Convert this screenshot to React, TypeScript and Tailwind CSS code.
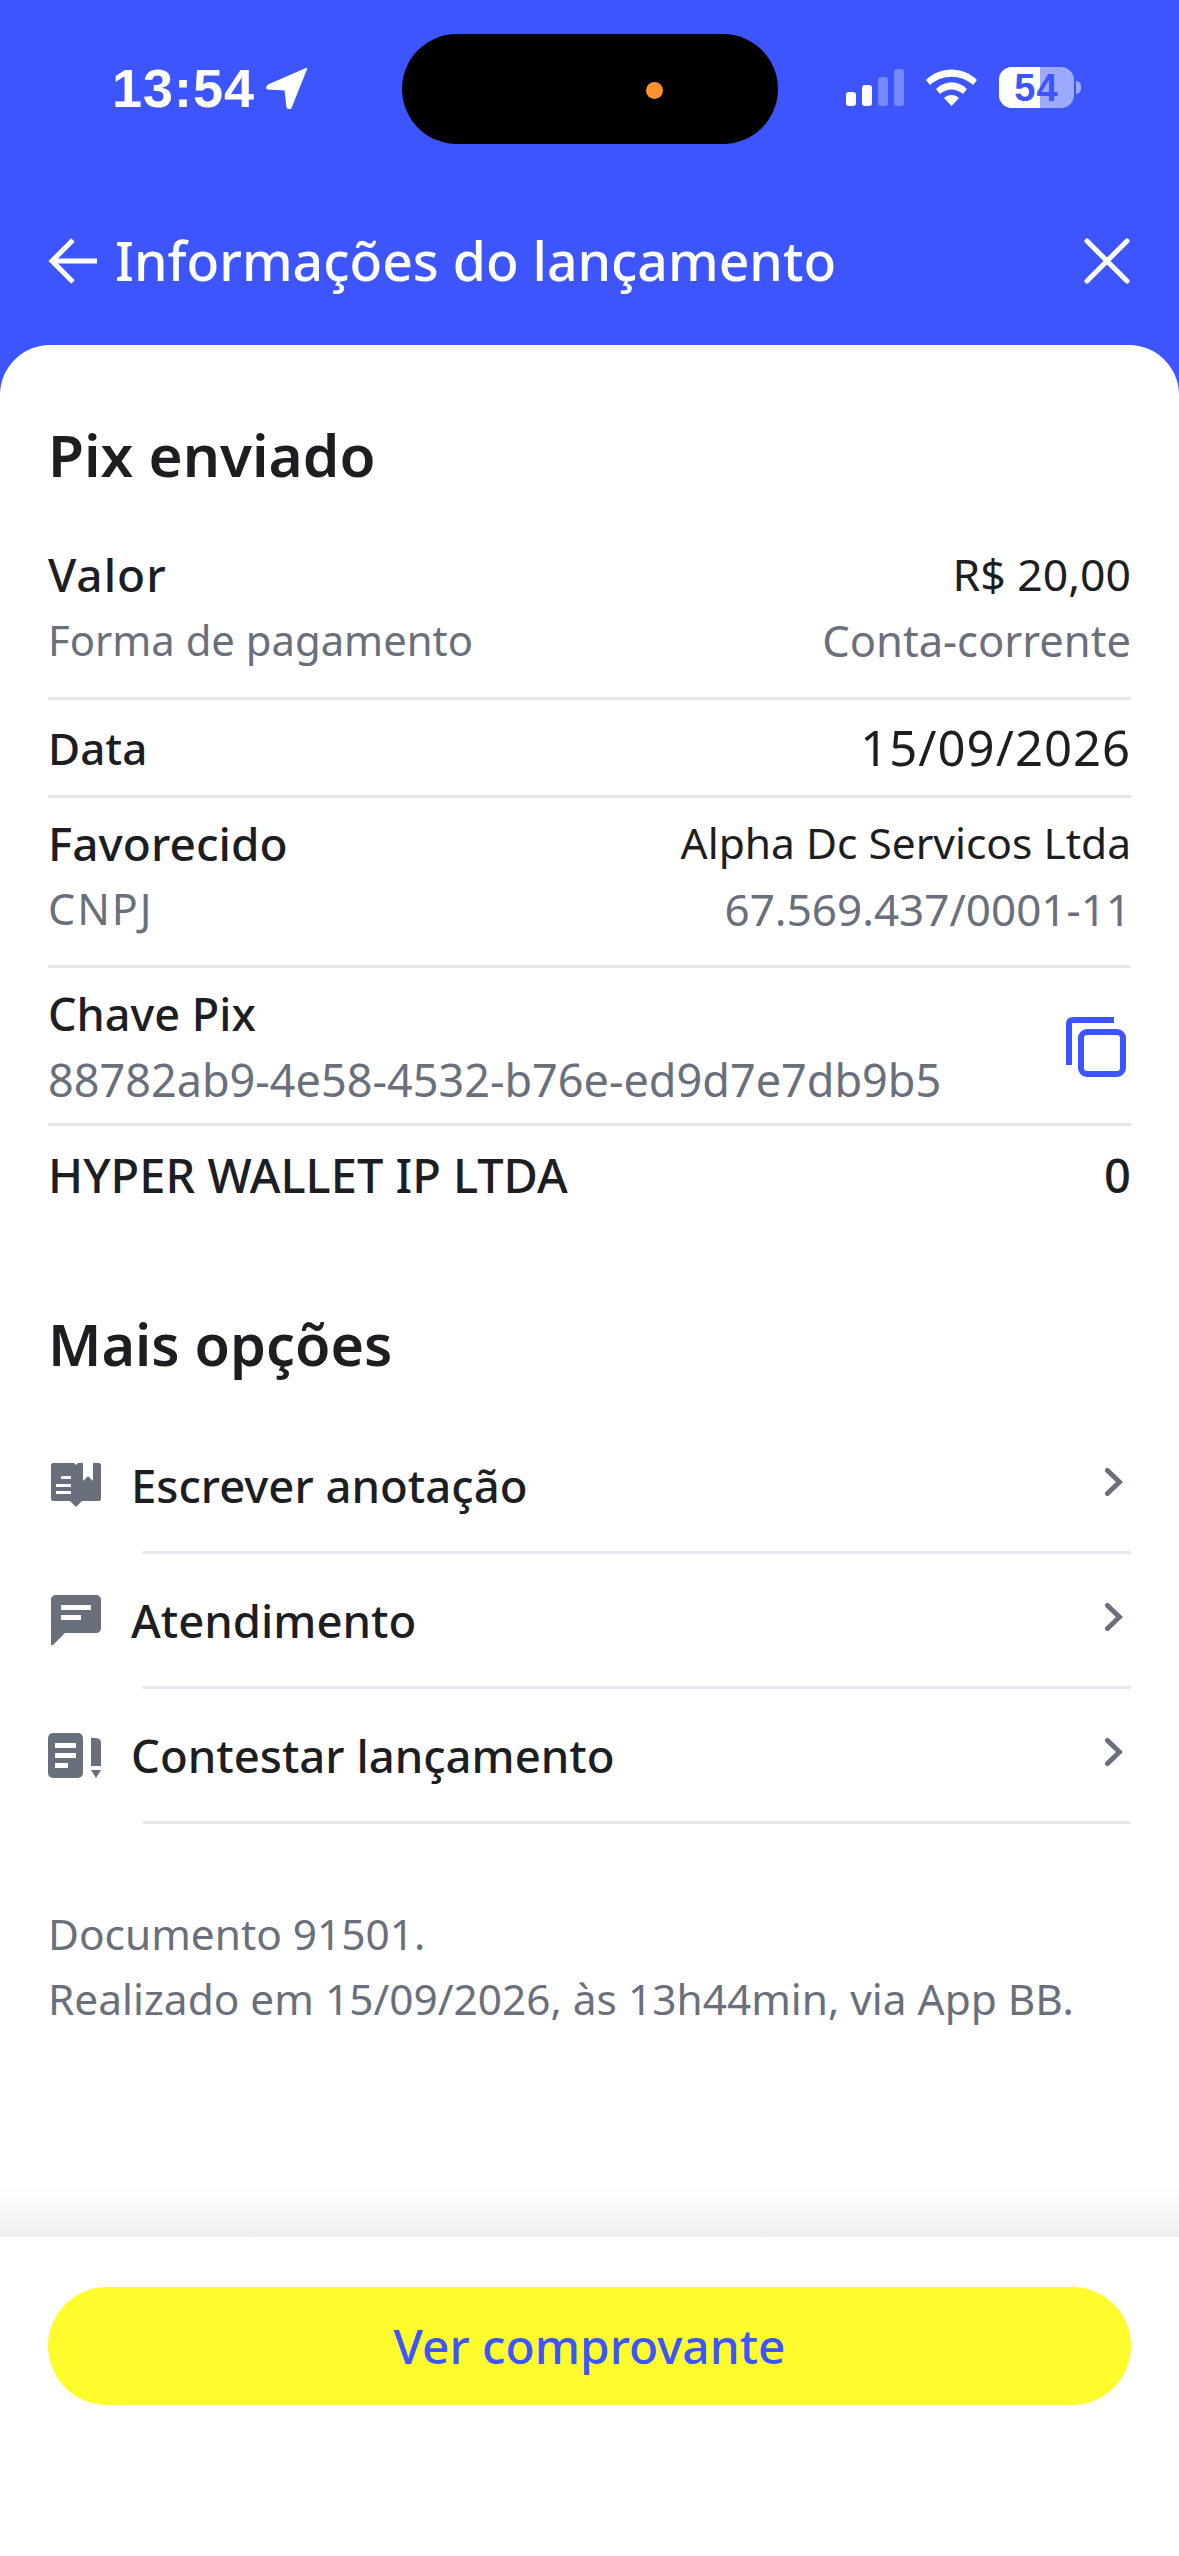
import React from "react";

const font = { fontFamily: '"Noto Sans", sans-serif' };

function Line({ left, right, leftClass, rightClass }: { left: string; right: string; leftClass: string; rightClass: string }) {
  return (
    <div className="flex h-[66px] items-center justify-between leading-[66px]">
      <span className={leftClass}>{left}</span>
      <span className={rightClass}>{right}</span>
    </div>
  );
}

function Divider() {
  return <div className="h-[3px] bg-[#e6e6ec]" />;
}

function Chevron() {
  return (
    <svg width="18" height="28" viewBox="0 0 18 28" fill="none" className="mb-[7px] mr-[8px] shrink-0">
      <path d="M2.5 2.5 L14.5 14 L2.5 25.5" stroke="#6a6f7c" strokeWidth="5" strokeLinecap="round" />
    </svg>
  );
}

function BookIcon() {
  return (
    <svg width="50" height="44" viewBox="0 0 50 44" className="shrink-0">
      <path d="M2 0H23L25 2L27 0H32V18L37 13L42 18V0H48C49 0 50 1 50 2V36C50 37 49 38 48 38H31L25 44L19 38H2C1 38 0 37 0 36V2C0 1 1 0 2 0Z" fill="#6a6f7c" />
      <rect x="10" y="13" width="10" height="3" fill="#fff" />
      <rect x="5" y="21" width="15" height="3" fill="#fff" />
      <rect x="5" y="28" width="15" height="3" fill="#fff" />
    </svg>
  );
}

function ChatIcon() {
  return (
    <svg width="50" height="51" viewBox="0 0 50 51" className="shrink-0">
      <path d="M5 0H45C48 0 50 2 50 5V33C50 36 48 38 45 38H14L2 50C1 51 0 50 0 49V5C0 2 2 0 5 0Z" fill="#6a6f7c" />
      <rect x="10" y="10" width="30" height="5" fill="#fff" />
      <rect x="10" y="20" width="20" height="5" fill="#fff" />
    </svg>
  );
}

function ContestIcon() {
  return (
    <svg width="53" height="45" viewBox="0 0 53 45" className="shrink-0">
      <rect x="0" y="0" width="35" height="45" rx="5" fill="#6a6f7c" />
      <rect x="7" y="10" width="21" height="5" fill="#fff" />
      <rect x="7" y="20" width="21" height="5" fill="#fff" />
      <rect x="7" y="30" width="13" height="5" fill="#fff" />
      <path d="M43 5C47 5 53 4 53 10V33H43V10Z" fill="#6a6f7c" />
      <path d="M43 37H53L48 45Z" fill="#6a6f7c" />
    </svg>
  );
}

function Option({ icon, label }: { icon: React.ReactNode; label: string }) {
  return (
    <div>
      <div className="flex h-[132px] items-center">
        <div className="flex w-[83px] shrink-0 items-center justify-end pr-[30px]">{icon}</div>
        <span className="flex-1 text-[45.5px] font-medium text-[#1d1e22]">{label}</span>
        <Chevron />
      </div>
      <div className="ml-[95px] h-[3px] bg-[#e6e6ec]" />
    </div>
  );
}

export default function App() {
  return (
    <div className="flex h-[2556px] w-[1179px] flex-col overflow-hidden bg-[#3c55ff]" style={font}>
      {/* status bar */}
      <div className="relative h-[345px] shrink-0">
        <div className="absolute left-[112px] top-[56px] flex items-center gap-[11px]">
          <span className="text-[54px] font-bold leading-[64px] tracking-[1px] text-white" style={{ fontFamily: '"Liberation Sans", sans-serif' }}>13:54</span>
          <svg width="42" height="42" viewBox="0 0 42 42">
            <path d="M41 1 L25 41 C24 43 21 42 21 40 L19 23 L2 22 C0 22 0 20 2 18 Z" fill="#fff" stroke="#fff" strokeWidth="1" />
          </svg>
        </div>
        <div className="absolute left-[402px] top-[34px] h-[110px] w-[376px] rounded-[55px] bg-black">
          <div className="absolute left-[244px] top-[48px] h-[17px] w-[17px] rounded-full bg-[#ff9230]" />
        </div>
        <svg className="absolute left-[846px] top-[69px]" width="58" height="37" viewBox="0 0 58 37">
          <rect x="0" y="23" width="10" height="14" rx="3" fill="#fff" />
          <rect x="16" y="16" width="10" height="21" rx="3" fill="#fff" />
          <rect x="32" y="8" width="10" height="29" rx="3" fill="#fff" opacity="0.3" />
          <rect x="48" y="0" width="10" height="37" rx="3" fill="#fff" opacity="0.3" />
        </svg>
        <svg className="absolute left-[926px] top-[69px]" width="51" height="37" viewBox="0 0 51 37">
          <path d="M0 11 C14 -3 37 -3 51 11 L47 16 C35 5 16 5 4 16 Z" fill="#fff" />
          <path d="M10 20 C19 11 32 11 41 20 L37 25 C30 19 21 19 14 25 Z" fill="#fff" />
          <path d="M18 29 C22 25 29 25 33 29 L25.5 37 Z" fill="#fff" />
        </svg>
        <div className="absolute left-[999px] top-[67px] flex h-[41px] w-[75px] items-center justify-center overflow-hidden rounded-[13px] bg-white/50">
          <div className="absolute bottom-0 left-0 top-0 w-[41px] bg-white" />
          <span className="relative text-[38px] font-bold leading-none tracking-[1px] text-[#3c55ff]" style={{ fontFamily: '"Liberation Sans", sans-serif' }}>54</span>
        </div>
        <div className="absolute left-[1076px] top-[81px] h-[13px] w-[5px] rounded-r-full bg-white/50" />
        {/* nav */}
        <div className="absolute left-0 right-0 top-[221px] flex h-[80px] items-center pl-[48px] pr-[49px]">
          <svg width="50" height="48" viewBox="0 0 50 48" className="shrink-0">
            <path d="M49 24H5M25 3L4 24L25 45" stroke="#fff" strokeWidth="5" fill="none" />
          </svg>
          <span className="ml-[17px] flex-1 text-[53.5px] font-medium text-white">Informações do lançamento</span>
          <svg width="46" height="46" viewBox="0 0 46 46" className="shrink-0">
            <path d="M3 3L43 43M43 3L3 43" stroke="#fff" strokeWidth="5" strokeLinecap="round" fill="none" />
          </svg>
        </div>
      </div>

      {/* body */}
      <div className="flex flex-1 flex-col overflow-hidden rounded-t-[50px] bg-white">
        <div className="flex-1 px-[48px] pt-[68px]">
          <h1 className="h-[82px] text-[58.5px] font-semibold leading-[82px] text-[#1d1e22]">Pix enviado</h1>
          <div className="pt-[46px] pb-[24px]">
            <Line left="Valor" right="R$ 20,00" leftClass="text-[46px] font-medium tracking-[1px] text-[#1d1e22]" rightClass="text-[44.5px] text-[#1d1e22]" />
            <Line left="Forma de pagamento" right="Conta-corrente" leftClass="text-[41.8px] text-[#6a6f7c]" rightClass="text-[43.5px] text-[#6a6f7c]" />
          </div>
          <Divider />
          <div className="flex h-[95px] items-center justify-between">
            <span className="text-[44px] font-medium text-[#1d1e22]">Data</span>
            <span className="text-[49px] tracking-[1px] text-[#1d1e22]">15/09/2026</span>
          </div>
          <Divider />
          <div className="pt-[12px] pb-[23px]">
            <Line left="Favorecido" right="Alpha Dc Servicos Ltda" leftClass="text-[46px] font-medium text-[#1d1e22]" rightClass="text-[42.5px] text-[#1d1e22]" />
            <Line left="CNPJ" right="67.569.437/0001-11" leftClass="text-[43px] tracking-[2px] text-[#6a6f7c]" rightClass="text-[44px] text-[#6a6f7c]" />
          </div>
          <Divider />
          <div className="flex items-center justify-between pb-[10px] pt-[13px]">
            <div>
              <div className="h-[66px] text-[45px] font-medium leading-[66px] text-[#1d1e22]">Chave Pix</div>
              <div className="h-[66px] text-[45px] leading-[66px] text-[#6a6f7c]">88782ab9-4e58-4532-b76e-ed9d7e7db9b5</div>
            </div>
            <svg width="60" height="60" viewBox="0 0 60 60" className="mr-[5px]">
              <path d="M48 3H7Q3 3 3 7V48" stroke="#3c55ff" strokeWidth="6" fill="none" />
              <rect x="15" y="15" width="42" height="42" rx="6" stroke="#3c55ff" strokeWidth="6" fill="none" />
            </svg>
          </div>
          <Divider />
          <div className="flex h-[98px] items-center justify-between text-[47px] font-medium text-[#1d1e22]">
            <span>HYPER WALLET IP LTDA</span>
            <span>0</span>
          </div>
          <h2 className="mt-[75px] h-[90px] text-[57.5px] font-semibold leading-[90px] text-[#1d1e22]">Mais opções</h2>
          <div className="pt-[30px]">
            <Option icon={<BookIcon />} label="Escrever anotação" />
            <Option icon={<ChatIcon />} label="Atendimento" />
            <Option icon={<ContestIcon />} label="Contestar lançamento" />
          </div>
          <p className="mt-[77px] text-[42.4px] leading-[65px] text-[#6a6f7c]">
            Documento 91501.
            <br />
            Realizado em 15/09/2026, às 13h44min, via App BB.
          </p>
        </div>
        <div className="h-[50px] shrink-0 bg-gradient-to-b from-white to-[#efefef]" />
        <div className="h-[319px] shrink-0 bg-white px-[48px] pt-[50px]">
          <button className="flex h-[118px] w-full items-center justify-center rounded-[59px] bg-[#fffc2d] text-[47.8px] font-medium text-[#3c55ff]">
            Ver comprovante
          </button>
        </div>
      </div>
    </div>
  );
}
